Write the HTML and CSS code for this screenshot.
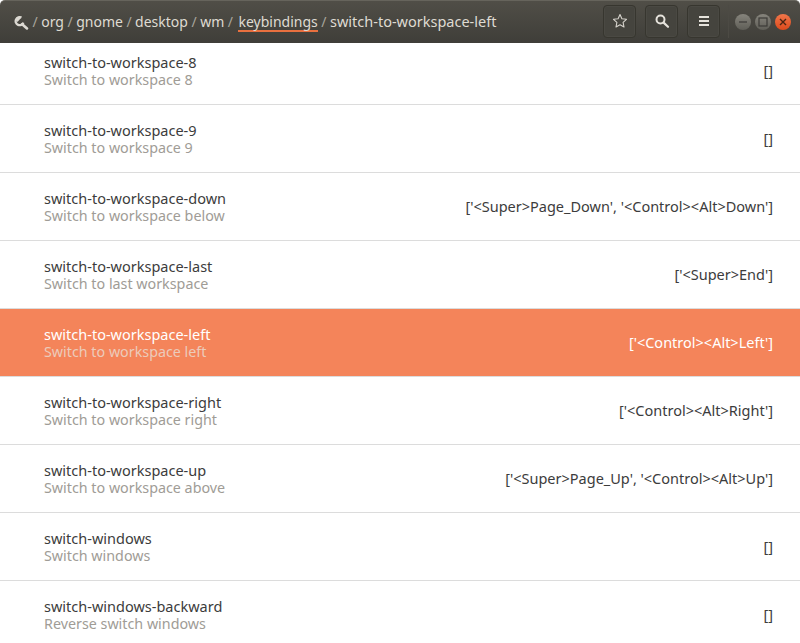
FILE: index.html
```html
<!DOCTYPE html>
<html lang="en">
<head>
  <meta charset="UTF-8" />
  <meta name="viewport" content="width=device-width, initial-scale=1" />
  <title>switch-to-workspace-left</title>
  <link rel="stylesheet" href="styles.css">
</head>
<body>
  <!-- Header bar -->
  <header class="headerbar">
    <nav class="path">
      <svg class="root-icon" width="15" height="14" viewBox="0 0 15 14">
        <path d="M7.5 1.6A4 4 0 1 0 9.4 6.6" fill="none" stroke="#dcd9d2" stroke-width="2.3" />
        <path d="M1.5 3.5L5 .4 7 2 3.5 6z" fill="#dcd9d2" />
        <path d="M8.2 8.2l4.8 4.2" stroke="#dcd9d2" stroke-width="2.6" stroke-linecap="round" />
      </svg>
      <span class="sep">/</span><span>org</span>
      <span class="sep">/</span><span>gnome</span>
      <span class="sep">/</span><span>desktop</span>
      <span class="sep">/</span><span>wm</span>
      <span class="sep">/</span><span class="current">keybindings</span>
      <span class="sep">/</span><span class="leaf">switch-to-workspace-left</span>
    </nav>
    <div class="tools">
      <button class="tool">
        <svg width="16" height="16" viewBox="0 0 16 16"><path d="M8 1.6l1.9 4.2 4.6.5-3.4 3.1.9 4.6L8 11.7 4 14l.9-4.6-3.4-3.1 4.6-.5z" fill="none" stroke="#d6d3cc" stroke-width="1.1" stroke-linejoin="round" /></svg>
      </button>
      <button class="tool">
        <svg width="16" height="16" viewBox="0 0 16 16"><circle cx="6.5" cy="6.5" r="4" fill="none" stroke="#e6e3dc" stroke-width="2" /><path d="M9.6 9.6l4.4 4.2" stroke="#e6e3dc" stroke-width="2.2" stroke-linecap="round" /></svg>
      </button>
      <button class="tool">
        <svg width="16" height="16" viewBox="0 0 16 16"><path d="M3 3h10v2H3zM3 7h10v2H3zM3 11h10v2H3z" fill="#e6e3dc" /></svg>
      </button>
    </div>
    <div class="window-buttons">
      <span class="wbtn">
        <svg width="12" height="12" viewBox="0 0 12 12"><path d="M2 6h8" stroke="#3c3b37" stroke-width="1.2" /></svg>
      </span>
      <span class="wbtn">
        <svg width="12" height="12" viewBox="0 0 12 12"><rect x="2" y="2" width="8" height="8" fill="none" stroke="#3c3b37" stroke-width="1.2" /></svg>
      </span>
      <span class="wbtn close">
        <svg width="12" height="12" viewBox="0 0 12 12"><path d="M3 3l6 6M9 3l-6 6" stroke="#4a2413" stroke-width="1.4" /></svg>
      </span>
    </div>
  </header>

  <!-- Key list -->
  <main class="scroller">
    <ul class="keys">
      <li class="key"><div class="names"><div class="name">switch-to-workspace-8</div><div class="summary">Switch to workspace 8</div></div><div class="value">[]</div></li>
      <li class="key"><div class="names"><div class="name">switch-to-workspace-9</div><div class="summary">Switch to workspace 9</div></div><div class="value">[]</div></li>
      <li class="key"><div class="names"><div class="name">switch-to-workspace-down</div><div class="summary">Switch to workspace below</div></div><div class="value">['&lt;Super&gt;Page_Down', '&lt;Control&gt;&lt;Alt&gt;Down']</div></li>
      <li class="key"><div class="names"><div class="name">switch-to-workspace-last</div><div class="summary">Switch to last workspace</div></div><div class="value">['&lt;Super&gt;End']</div></li>
      <li class="key selected"><div class="names"><div class="name">switch-to-workspace-left</div><div class="summary">Switch to workspace left</div></div><div class="value">['&lt;Control&gt;&lt;Alt&gt;Left']</div></li>
      <li class="key"><div class="names"><div class="name">switch-to-workspace-right</div><div class="summary">Switch to workspace right</div></div><div class="value">['&lt;Control&gt;&lt;Alt&gt;Right']</div></li>
      <li class="key"><div class="names"><div class="name">switch-to-workspace-up</div><div class="summary">Switch to workspace above</div></div><div class="value">['&lt;Super&gt;Page_Up', '&lt;Control&gt;&lt;Alt&gt;Up']</div></li>
      <li class="key"><div class="names"><div class="name">switch-windows</div><div class="summary">Switch windows</div></div><div class="value">[]</div></li>
      <li class="key"><div class="names"><div class="name">switch-windows-backward</div><div class="summary">Reverse switch windows</div></div><div class="value">[]</div></li>
    </ul>
  </main>
</body>
</html>
```

FILE: styles.css
```css
html, body {
  height: 100%;
}
body {
  margin: 0;
  font-family: 'Noto Sans', sans-serif;
  font-size: 14.5px;
  color: #3c3c3c;
  background: #fff;
  display: flex;
  flex-direction: column;
  overflow: hidden;
}
.headerbar {
  flex: none;
  height: 43px;
  box-sizing: border-box;
  display: flex;
  align-items: center;
  padding: 0 9px 2px 14px;
  font-size: 14px;
  color: #dfdbd2;
  background: linear-gradient(#504e47, #3f3e39);
  border-top: 1px solid #66645c;
  border-radius: 5px 5px 0 0;
}
.path {
  flex: 1;
  display: flex;
  align-items: center;
  gap: 3.5px;
  white-space: nowrap;
}
.root-icon {
  margin: 3px 0 0 0;
}
.sep {
  color: #a8a59c;
}
.current {
  border-bottom: 2px solid #e9703f;
  line-height: 17px;
  margin: 2px 0 0 2px;
}
.leaf {
  font-size: 14.5px;
}
.tools {
  display: flex;
  gap: 9px;
  padding-right: 8px;
  margin-right: 6px;
  border-right: 1px solid #4c4a44;
  height: 33px;
}
.tool {
  width: 33px;
  height: 33px;
  padding: 0;
  display: flex;
  align-items: center;
  justify-content: center;
  background: #45443e;
  border: 1px solid #37362f;
  border-radius: 4px;
  box-shadow: inset 0 0 0 1px #4a4943;
}
.window-buttons {
  display: flex;
  gap: 4px;
  padding-top: 1px;
}
.wbtn {
  width: 16px;
  height: 16px;
  display: flex;
  align-items: center;
  justify-content: center;
  border-radius: 50%;
  background: linear-gradient(#86847c, #5f5e57);
}
.close {
  background: linear-gradient(#f0764a, #dc4a1c);
}
.scroller {
  flex: 1;
  overflow: hidden;
}
.keys {
  list-style: none;
  margin: -6px 0 0;
  padding: 0;
}
.key {
  height: 68px;
  box-sizing: border-box;
  display: flex;
  align-items: center;
  justify-content: space-between;
  padding: 0 27px 0 44px;
  border-bottom: 1px solid #dcdcdc;
}
.name {
  line-height: 17px;
}
.summary {
  font-size: 14.3px;
  line-height: 17px;
  color: #a09c96;
}
.value {
  margin-top: -2px;
}
.selected {
  background: #f4845a;
  color: #fff;
}
.selected .summary {
  color: #eccbbb;
}
```
